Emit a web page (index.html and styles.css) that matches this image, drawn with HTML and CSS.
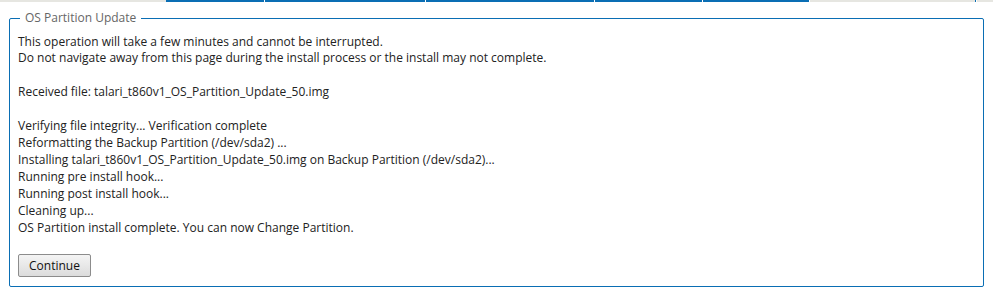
FILE: index.html
```html
<!DOCTYPE html>
<html>
<head>
<meta charset="utf-8">
<link rel="stylesheet" href="styles.css">
</head>
<body>
<div class="tabs">
  <div class="tab off" style="width:166px"></div>
  <div class="tab on" style="width:98px"></div>
  <div class="tab on" style="width:160px"></div>
  <div class="tab on" style="width:168px"></div>
  <div class="tab on" style="width:107px"></div>
  <div class="tab on" style="width:106px"></div>
  <div class="tab off" style="width:165px"></div>
  <div class="tab on" style="width:1px"></div>
  <div class="tab off fill"></div>
</div>
<fieldset class="panel">
  <legend class="panel-title">OS Partition Update</legend>
  <div class="intro">
    <div>This operation will take a few minutes and cannot be interrupted.</div>
    <div>Do not navigate away from this page during the install process or the install may not complete.</div>
  </div>
  <div class="log">
    <div class="blank">&nbsp;</div>
    <div>Received file: talari_t860v1_OS_Partition_Update_50.img</div>
    <div class="blank">&nbsp;</div>
    <div>Verifying file integrity... Verification complete</div>
    <div>Reformatting the Backup Partition (/dev/sda2) ...</div>
    <div>Installing talari_t860v1_OS_Partition_Update_50.img on Backup Partition (/dev/sda2)...</div>
    <div>Running pre install hook...</div>
    <div>Running post install hook...</div>
    <div>Cleaning up...</div>
    <div>OS Partition install complete. You can now Change Partition.</div>
  </div>
  <button class="btn">Continue</button>
</fieldset>
</body>
</html>
```
FILE: styles.css
```css
html, body {
  margin: 0;
  padding: 0;
  background: #ffffff;
}
body {
  font-family: "Open Sans", "Liberation Sans", sans-serif;
  font-size: 12px;
  color: #222;
}
.tabs {
  display: flex;
  height: 2px;
}
.tab {
  height: 2px;
  flex: none;
}
.tab.on {
  background: #0a6eb4;
  border-right: 1px solid #fff;
  box-sizing: content-box;
}
.tab.off {
  background: #e6e6e1;
}
.tab.fill {
  flex: 1;
}
.panel {
  margin: 8px 9px 0 9px;
  padding: 8px 8px 9px 8px;
  border: 1px solid #0a6eb4;
  border-radius: 2px;
  min-width: 0;
}
.panel-title {
  color: #666;
  padding: 0 5px;
  margin-left: 2px;
  font-size: 12px;
  line-height: 16px;
}
.intro {
  line-height: 16px;
}
.log {
  line-height: 17px;
  margin-bottom: 18px;
}
.btn {
  font-family: "Open Sans", "Liberation Sans", sans-serif;
  font-size: 12px;
  color: #111;
  height: 23px;
  width: 73px;
  padding: 0;
  border: 1px solid #8c8c8c;
  border-radius: 2px;
  background: linear-gradient(#f4f4f4, #dcdcdc);
  display: block;
}
```
